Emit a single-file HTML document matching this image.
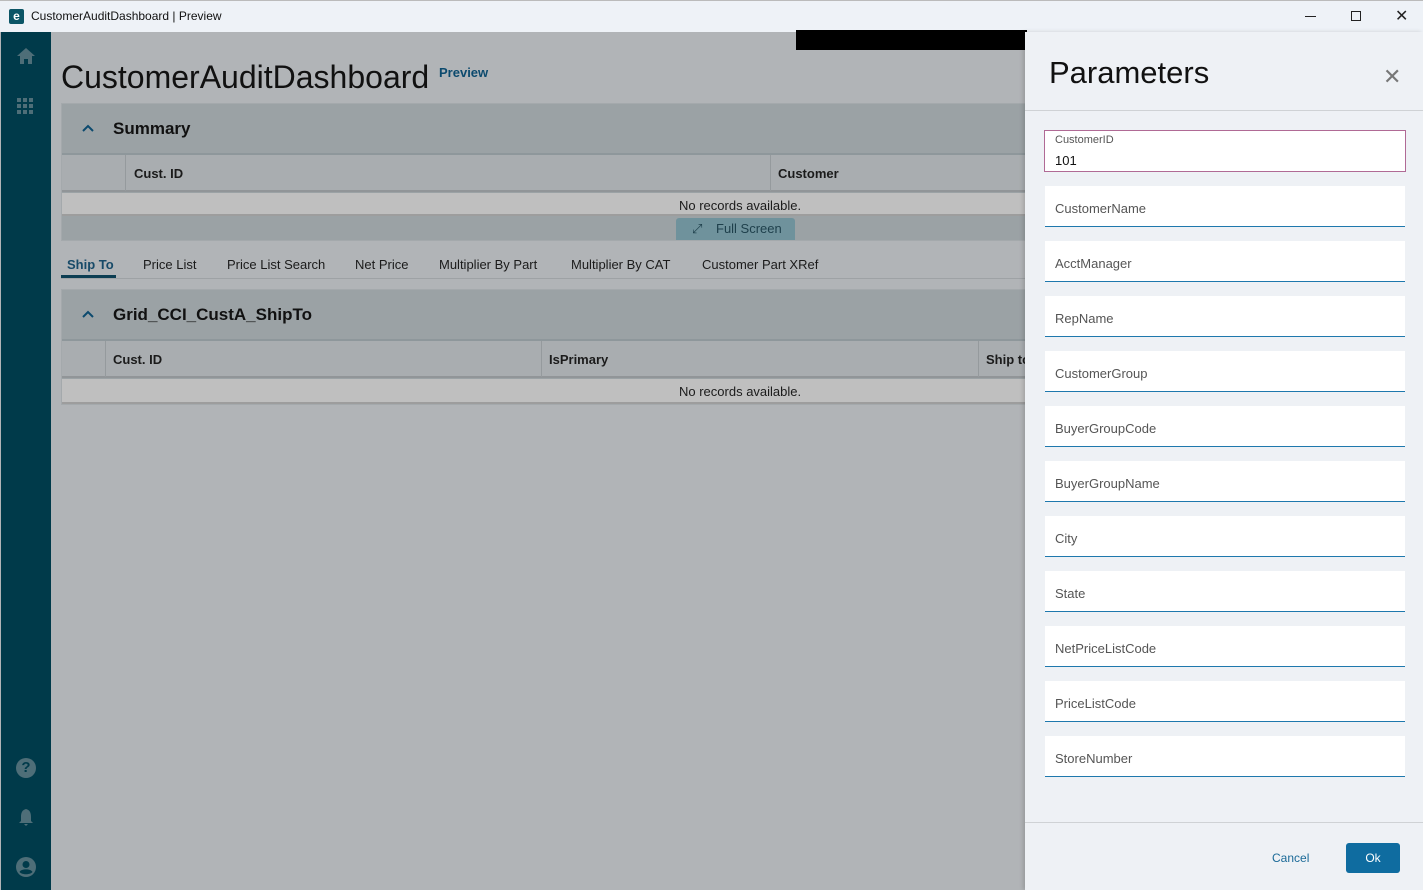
<!DOCTYPE html>
<html><head><meta charset="utf-8"><style>
*{margin:0;padding:0;box-sizing:border-box}
body{width:1423px;height:890px;overflow:hidden;position:relative;font-family:"Liberation Sans",sans-serif;background:#b1b4b7;color:#1b1b1b}
.a{position:absolute}
.t13{font-size:13px}
</style></head><body>
<div class="a" style="left:0;top:0;width:1423px;height:32px;background:#eef2f7;border-top:1px solid #bbb"></div>
<div class="a" style="left:9px;top:9px;width:15px;height:15px;background:#0b5566;border-radius:2px;color:#fff;font-size:12px;font-weight:bold;line-height:15px;text-align:center">e</div>
<div class="a" style="left:31px;top:9px;font-size:12px;color:#111">CustomerAuditDashboard | Preview</div>
<div class="a" style="left:1305px;top:16px;width:11px;height:1px;background:#222"></div>
<div class="a" style="left:1351px;top:11px;width:10px;height:10px;border:1px solid #222"></div>
<div class="a" style="left:1395px;top:6px;font-size:16px;color:#222">✕</div>
<div class="a" style="left:1px;top:32px;width:50px;height:858px;background:#003a4a"></div>
<svg class="a" style="left:16px;top:47px" width="20" height="18" viewBox="0 0 20 18"><path d="M10 1 L1 9 H4 V17 H8 V12 H12 V17 H16 V9 H19 Z" fill="#4e6e78"/></svg>
<svg class="a" style="left:17px;top:98px" width="18" height="18"><g fill="#4e6e78"><rect x="0" y="0" width="4" height="4"/><rect x="6" y="0" width="4" height="4"/><rect x="12" y="0" width="4" height="4"/><rect x="0" y="6" width="4" height="4"/><rect x="6" y="6" width="4" height="4"/><rect x="12" y="6" width="4" height="4"/><rect x="0" y="12" width="4" height="4"/><rect x="6" y="12" width="4" height="4"/><rect x="12" y="12" width="4" height="4"/></g></svg>
<div class="a" style="left:16px;top:758px;width:20px;height:20px;border-radius:50%;background:#4e6e78;color:#003a4a;font-weight:bold;font-size:15px;text-align:center;line-height:20px">?</div>
<svg class="a" style="left:17px;top:808px" width="18" height="20"><path d="M9 1 C5 2 4 5 4 9 V13 L2 15 H16 L14 13 V9 C14 5 13 2 9 1Z M7 16 H11 L9 18Z" fill="#4e6e78"/></svg>
<svg class="a" style="left:16px;top:857px" width="20" height="20"><circle cx="10" cy="10" r="10" fill="#4e6e78"/><circle cx="10" cy="7.5" r="3.5" fill="#003a4a"/><path d="M3.5 15 C5 11.5 15 11.5 16.5 15 C14 18 6 18 3.5 15Z" fill="#003a4a"/></svg>
<div class="a" style="left:796px;top:30px;width:231px;height:20px;background:#000"></div>
<div class="a" style="left:61px;top:59px;font-size:32px;color:#111">CustomerAuditDashboard</div>
<div class="a" style="left:439px;top:65px;font-size:13px;color:#0c4a6e;font-weight:bold">Preview</div>
<div class="a" style="left:61px;top:103px;width:966px;height:138px;background:#9ba2a5;border:1px solid #a4a9ac"></div>
<svg class="a" style="left:81px;top:123px" width="14" height="10"><path d="M2 8 L7 3 L12 8" stroke="#0c4a6e" stroke-width="2" fill="none"/></svg>
<div class="a" style="left:113px;top:119px;font-size:17px;font-weight:bold;color:#111">Summary</div>
<div class="a" style="left:62px;top:153px;width:965px;height:39px;background:#a9adb0;border-top:2px solid #8e979b;border-bottom:2px solid #919598"></div>
<div class="a" style="left:125px;top:155px;width:1px;height:36px;background:#959a9d"></div>
<div class="a" style="left:770px;top:155px;width:1px;height:36px;background:#959a9d"></div>
<div class="a t13" style="left:134px;top:166px;font-weight:bold">Cust. ID</div>
<div class="a t13" style="left:778px;top:166px;font-weight:bold">Customer</div>
<div class="a" style="left:62px;top:193px;width:965px;height:23px;background:#bfbfbf;border-bottom:2px solid #9d9d9d"></div>
<div class="a t13" style="left:679px;top:198px">No records available.</div>
<div class="a" style="left:676px;top:218px;width:119px;height:22px;background:#6f929c;border-radius:3px 3px 0 0"></div>
<div class="a t13" style="left:692px;top:221px;color:#1e3f4b">⤢</div>
<div class="a t13" style="left:716px;top:221px;color:#1e3f4b">Full Screen</div>
<div class="a" style="left:61px;top:278px;width:966px;height:1px;background:#9ea2a5"></div>
<div class="a" style="left:61px;top:275px;width:55px;height:3px;background:#0c3d52"></div>
<div class="a t13" style="left:67px;top:257px;font-weight:bold;color:#174a68">Ship To</div>
<div class="a t13" style="left:143px;top:257px">Price List</div>
<div class="a t13" style="left:227px;top:257px">Price List Search</div>
<div class="a t13" style="left:355px;top:257px">Net Price</div>
<div class="a t13" style="left:439px;top:257px">Multiplier By Part</div>
<div class="a t13" style="left:571px;top:257px">Multiplier By CAT</div>
<div class="a t13" style="left:702px;top:257px">Customer Part XRef</div>
<div class="a" style="left:61px;top:289px;width:966px;height:116px;background:#9ba2a5;border:1px solid #a4a9ac"></div>
<svg class="a" style="left:81px;top:309px" width="14" height="10"><path d="M2 8 L7 3 L12 8" stroke="#0c4a6e" stroke-width="2" fill="none"/></svg>
<div class="a" style="left:113px;top:305px;font-size:17px;font-weight:bold;color:#111">Grid_CCI_CustA_ShipTo</div>
<div class="a" style="left:62px;top:339px;width:965px;height:39px;background:#a9adb0;border-top:2px solid #8e979b;border-bottom:2px solid #919598"></div>
<div class="a" style="left:105px;top:341px;width:1px;height:36px;background:#959a9d"></div>
<div class="a" style="left:541px;top:341px;width:1px;height:36px;background:#959a9d"></div>
<div class="a" style="left:978px;top:341px;width:1px;height:36px;background:#959a9d"></div>
<div class="a t13" style="left:113px;top:352px;font-weight:bold">Cust. ID</div>
<div class="a t13" style="left:549px;top:352px;font-weight:bold">IsPrimary</div>
<div class="a t13" style="left:986px;top:352px;font-weight:bold">Ship to</div>
<div class="a" style="left:62px;top:379px;width:965px;height:25px;background:#bfbfbf;border-bottom:2px solid #9d9d9d"></div>
<div class="a t13" style="left:679px;top:384px">No records available.</div>
<div class="a" style="left:1025px;top:32px;width:398px;height:858px;background:#eef1f5;box-shadow:-2px 0 4px rgba(0,0,0,.15)"></div>
<div class="a" style="left:1049px;top:55px;font-size:31px;color:#111">Parameters</div>
<div class="a" style="left:1383px;top:64px;font-size:22px;color:#777">✕</div>
<div class="a" style="left:1025px;top:110px;width:398px;height:1px;background:#cfd2d5"></div>
<div class="a" style="left:1044px;top:130px;width:362px;height:42px;background:#fff;border:1px solid #b06a95"></div>
<div class="a" style="left:1055px;top:134px;font-size:11px;color:#555">CustomerID</div>
<div class="a t13" style="left:1055px;top:153px;color:#111">101</div>
<div class="a" style="left:1025px;top:822px;width:398px;height:1px;background:#cfd2d5"></div>
<div class="a" style="left:1272px;top:851px;font-size:12px;color:#1b6a98">Cancel</div>
<div class="a" style="left:1346px;top:843px;width:54px;height:30px;background:#0f6ca0;border-radius:3px;color:#fff;font-size:12px;text-align:center;line-height:30px">Ok</div>
<div class="a" style="left:1045px;top:186px;width:360px;height:41px;background:#fff;border-bottom:1px solid #1e78ad"></div><div class="a t13" style="left:1055px;top:201px;color:#555">CustomerName</div>
<div class="a" style="left:1045px;top:241px;width:360px;height:41px;background:#fff;border-bottom:1px solid #1e78ad"></div><div class="a t13" style="left:1055px;top:256px;color:#555">AcctManager</div>
<div class="a" style="left:1045px;top:296px;width:360px;height:41px;background:#fff;border-bottom:1px solid #1e78ad"></div><div class="a t13" style="left:1055px;top:311px;color:#555">RepName</div>
<div class="a" style="left:1045px;top:351px;width:360px;height:41px;background:#fff;border-bottom:1px solid #1e78ad"></div><div class="a t13" style="left:1055px;top:366px;color:#555">CustomerGroup</div>
<div class="a" style="left:1045px;top:406px;width:360px;height:41px;background:#fff;border-bottom:1px solid #1e78ad"></div><div class="a t13" style="left:1055px;top:421px;color:#555">BuyerGroupCode</div>
<div class="a" style="left:1045px;top:461px;width:360px;height:41px;background:#fff;border-bottom:1px solid #1e78ad"></div><div class="a t13" style="left:1055px;top:476px;color:#555">BuyerGroupName</div>
<div class="a" style="left:1045px;top:516px;width:360px;height:41px;background:#fff;border-bottom:1px solid #1e78ad"></div><div class="a t13" style="left:1055px;top:531px;color:#555">City</div>
<div class="a" style="left:1045px;top:571px;width:360px;height:41px;background:#fff;border-bottom:1px solid #1e78ad"></div><div class="a t13" style="left:1055px;top:586px;color:#555">State</div>
<div class="a" style="left:1045px;top:626px;width:360px;height:41px;background:#fff;border-bottom:1px solid #1e78ad"></div><div class="a t13" style="left:1055px;top:641px;color:#555">NetPriceListCode</div>
<div class="a" style="left:1045px;top:681px;width:360px;height:41px;background:#fff;border-bottom:1px solid #1e78ad"></div><div class="a t13" style="left:1055px;top:696px;color:#555">PriceListCode</div>
<div class="a" style="left:1045px;top:736px;width:360px;height:41px;background:#fff;border-bottom:1px solid #1e78ad"></div><div class="a t13" style="left:1055px;top:751px;color:#555">StoreNumber</div>
</body></html>
